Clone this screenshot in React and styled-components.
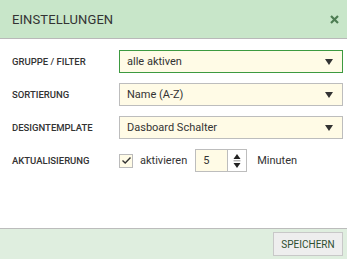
import React from 'react'
import styled, { createGlobalStyle } from 'styled-components'

const Global = createGlobalStyle`
  html, body {
    margin: 0;
    padding: 0;
    background: #fff;
    font-family: Roboto, 'Liberation Sans', sans-serif;
  }
`

const rows = [
  { label: 'GRUPPE / FILTER', value: 'alle aktiven', focused: true },
  { label: 'SORTIERUNG', value: 'Name (A-Z)' },
  { label: 'DESIGNTEMPLATE', value: 'Dasboard Schalter' },
]

const App = () => {
  return (
    <>
      <Global />
      <Dialog>
        <Header>
          <Title>EINSTELLUNGEN</Title>
          <Close>
            <svg width="9" height="9" viewBox="0 0 9 9">
              <path d="M1 1 L8 8 M8 1 L1 8" stroke="#4e7d53" strokeWidth="2.2" />
            </svg>
          </Close>
        </Header>
        <Content>
          {rows.map(r => (
            <Row key={r.label}>
              <Label>{r.label}</Label>
              <Select focused={r.focused}>
                <span>{r.value}</span>
                <Caret viewBox="0 0 8 6">
                  <path d="M0 0 H8 L4 6 Z" fill="#333" />
                </Caret>
              </Select>
            </Row>
          ))}
          <Row>
            <Label>AKTUALISIERUNG</Label>
            <Inline>
              <Check>
                <svg width="11" height="9" viewBox="0 0 11 9">
                  <path d="M1.5 4.5 L4.2 7 L9.5 1.5" stroke="#333" strokeWidth="1.4" fill="none" />
                </svg>
              </Check>
              <Text>aktivieren</Text>
              <NumberBox>
                <NumberValue>5</NumberValue>
                <Spinner>
                  <svg width="8" height="16" viewBox="0 0 8 16">
                    <path d="M4 1 L7.5 6 H0.5 Z" fill="#222" />
                    <rect x="0.5" y="7.3" width="7" height="1" fill="#999" />
                    <path d="M0.5 10 H7.5 L4 15 Z" fill="#222" />
                  </svg>
                </Spinner>
              </NumberBox>
              <Text>Minuten</Text>
            </Inline>
          </Row>
        </Content>
        <Footer>
          <SaveButton>SPEICHERN</SaveButton>
        </Footer>
      </Dialog>
    </>
  )
}

const Dialog = styled.div`
  width: 347px;
  height: 259px;
  display: flex;
  flex-direction: column;
  background: #fff;
  overflow: hidden;
`

const Header = styled.div`
  height: 39px;
  flex: none;
  display: flex;
  align-items: center;
  justify-content: space-between;
  padding: 1px 6px 0 12px;
  box-sizing: border-box;
  background: #c8e6c9;
  border-bottom: 1px solid #b9b9b9;
`

const Title = styled.div`
  font-size: 13px;
  color: #333;
  letter-spacing: 0.1px;
`

const Close = styled.div`
  width: 14px;
  height: 14px;
  display: flex;
  align-items: center;
  justify-content: center;
`

const Content = styled.div`
  flex: 1;
  display: flex;
  flex-direction: column;
  gap: 10px;
  padding: 11px 4px 0 12px;
`

const Row = styled.div`
  display: flex;
  align-items: center;
  height: 23px;
`

const Label = styled.div`
  width: 107px;
  flex: none;
  font-size: 9.5px;
  font-weight: 500;
  color: #333;
`

const Select = styled.div`
  width: 224px;
  height: 23px;
  box-sizing: border-box;
  display: flex;
  align-items: center;
  justify-content: space-between;
  padding: 0 9px 0 7px;
  background: #fffbe6;
  border: 1px solid ${p => (p.focused ? '#3d9a40' : '#bdbdbd')};
  font-size: 11px;
  color: #333;
`

const Caret = styled.svg`
  width: 8px;
  height: 6px;
`

const Inline = styled.div`
  display: flex;
  align-items: center;
`

const Check = styled.div`
  width: 14px;
  height: 14px;
  box-sizing: border-box;
  border: 1px solid #bbb;
  background: #fffbe6;
  display: flex;
  align-items: center;
  justify-content: center;
  margin-right: 7px;
`

const Text = styled.div`
  font-size: 11px;
  color: #333;
`

const NumberBox = styled.div`
  display: flex;
  height: 23px;
  width: 52px;
  box-sizing: border-box;
  border: 1px solid #bdbdbd;
  margin: 0 10px 0 8px;
`

const NumberValue = styled.div`
  width: 32px;
  background: #fffbe6;
  border-right: 1px solid #bdbdbd;
  font-size: 11px;
  color: #333;
  display: flex;
  align-items: center;
  padding-left: 7px;
  box-sizing: border-box;
`

const Spinner = styled.div`
  flex: 1;
  display: flex;
  align-items: center;
  justify-content: center;
  background: #fff;
`

const Footer = styled.div`
  height: 30px;
  flex: none;
  display: flex;
  align-items: center;
  justify-content: flex-end;
  padding-right: 4px;
  background: #dfeedf;
  border-top: 1px solid #bcbcbc;
`

const SaveButton = styled.button`
  height: 24px;
  width: 70px;
  padding: 0;
  background: #eeeeee;
  border: 1px solid #c8c8c8;
  font-family: Roboto, 'Liberation Sans', sans-serif;
  font-size: 10px;
  color: #2f4f2f;
  cursor: pointer;
`

export default App
